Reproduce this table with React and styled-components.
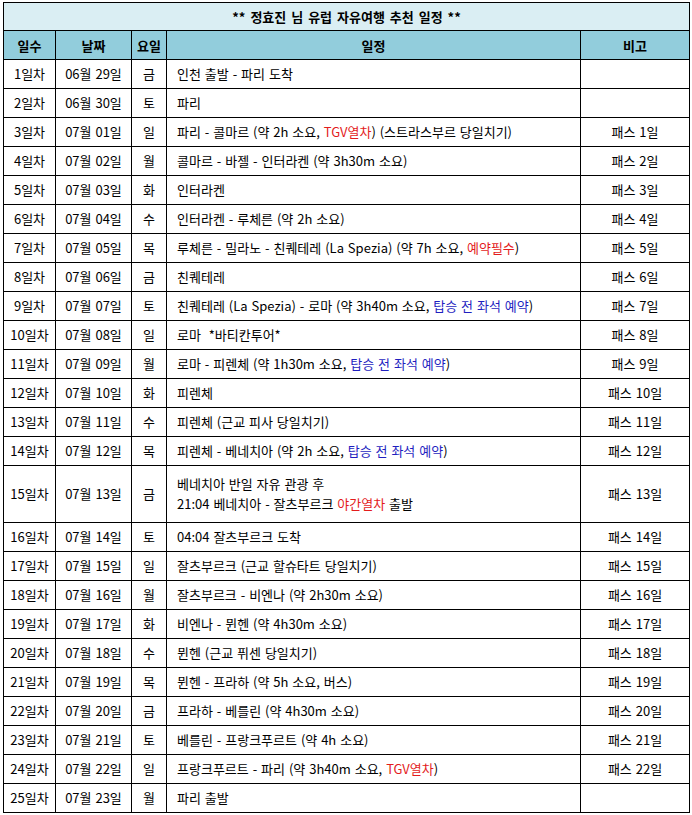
import React from 'react';
import styled, { createGlobalStyle } from 'styled-components';

const GlobalStyle = createGlobalStyle`
  html, body {
    margin: 0;
    padding: 0;
    background: #ffffff;
  }
  body {
    font-family: "Noto Sans CJK KR", "Noto Sans", sans-serif;
    color: #000;
  }
`;

const COLS = [52, 76, 35, 414, 109];

const schedule = [
  ['1일차', '06월 29일', '금', [['인천 출발 - 파리 도착']], ''],
  ['2일차', '06월 30일', '토', [['파리']], ''],
  ['3일차', '07월 01일', '일', [['파리 - 콜마르 (약 2h 소요, '], ['TGV열차', 'red'], [') (스트라스부르 당일치기)']], '패스 1일'],
  ['4일차', '07월 02일', '월', [['콜마르 - 바젤 - 인터라켄 (약 3h30m 소요)']], '패스 2일'],
  ['5일차', '07월 03일', '화', [['인터라켄']], '패스 3일'],
  ['6일차', '07월 04일', '수', [['인터라켄 - 루체른 (약 2h 소요)']], '패스 4일'],
  ['7일차', '07월 05일', '목', [['루체른 - 밀라노 - 친퀘테레 (La Spezia) (약 7h 소요, '], ['예약필수', 'red'], [')']], '패스 5일'],
  ['8일차', '07월 06일', '금', [['친퀘테레']], '패스 6일'],
  ['9일차', '07월 07일', '토', [['친퀘테레 (La Spezia) - 로마 (약 3h40m 소요, '], ['탑승 전 좌석 예약', 'blue'], [')']], '패스 7일'],
  ['10일차', '07월 08일', '일', [['로마 \u00a0*바티칸투어*']], '패스 8일'],
  ['11일차', '07월 09일', '월', [['로마 - 피렌체 (약 1h30m 소요, '], ['탑승 전 좌석 예약', 'blue'], [')']], '패스 9일'],
  ['12일차', '07월 10일', '화', [['피렌체']], '패스 10일'],
  ['13일차', '07월 11일', '수', [['피렌체 (근교 피사 당일치기)']], '패스 11일'],
  ['14일차', '07월 12일', '목', [['피렌체 - 베네치아 (약 2h 소요, '], ['탑승 전 좌석 예약', 'blue'], [')']], '패스 12일'],
  ['15일차', '07월 13일', '금', [['베네치아 반일 자유 관광 후'], ['br'], ['21:04 베네치아 - 잘츠부르크 '], ['야간열차', 'red'], [' 출발']], '패스 13일', true],
  ['16일차', '07월 14일', '토', [['04:04 잘츠부르크 도착']], '패스 14일'],
  ['17일차', '07월 15일', '일', [['잘츠부르크 (근교 할슈타트 당일치기)']], '패스 15일'],
  ['18일차', '07월 16일', '월', [['잘츠부르크 - 비엔나 (약 2h30m 소요)']], '패스 16일'],
  ['19일차', '07월 17일', '화', [['비엔나 - 뮌헨 (약 4h30m 소요)']], '패스 17일'],
  ['20일차', '07월 18일', '수', [['뮌헨 (근교 퓌센 당일치기)']], '패스 18일'],
  ['21일차', '07월 19일', '목', [['뮌헨 - 프라하 (약 5h 소요, 버스)']], '패스 19일'],
  ['22일차', '07월 20일', '금', [['프라하 - 베를린 (약 4h30m 소요)']], '패스 20일'],
  ['23일차', '07월 21일', '토', [['베를린 - 프랑크푸르트 (약 4h 소요)']], '패스 21일'],
  ['24일차', '07월 22일', '일', [['프랑크푸르트 - 파리 (약 3h40m 소요, '], ['TGV열차', 'red'], [')']], '패스 22일'],
  ['25일차', '07월 23일', '월', [['파리 출발']], ''],
];

const Page = styled.div`
  padding: 2px 0 0 3px;
`;

const Sheet = styled.table`
  border-collapse: collapse;
  table-layout: fixed;
  width: 687px;
  font-size: 13px;
`;

const TitleCell = styled.td`
  height: 27px;
  padding: 0;
  border: 1px solid #000;
  background: #daeef3;
  text-align: center;
  font-weight: bold;
  font-size: 13px;
  word-spacing: 2px;
`;

const HeadCell = styled.th`
  height: 28px;
  padding: 0;
  border: 1px solid #000;
  background: #92cddc;
  text-align: center;
  font-weight: bold;
  font-size: 13px;
`;

const Cell = styled.td`
  height: ${(p) => (p.$tall ? 56 : 28)}px;
  padding: ${(p) => (p.$left ? '0 6px 0 10px' : '0')};
  border: 1px solid #000;
  text-align: ${(p) => (p.$left ? 'left' : 'center')};
  line-height: 20px;
  word-spacing: 1px;
  white-space: nowrap;
  overflow: hidden;
`;

const Mark = styled.span`
  color: ${(p) => (p.$tone === 'red' ? '#e31c1c' : '#1f1fbf')};
`;

function Plan({ parts }) {
  return parts.map(([text, tone], i) => {
    if (text === 'br') return <br key={i} />;
    if (tone) return <Mark key={i} $tone={tone}>{text}</Mark>;
    return <React.Fragment key={i}>{text}</React.Fragment>;
  });
}

export default function App() {
  return (
    <Page>
      <GlobalStyle />
      <Sheet>
        <colgroup>
          {COLS.map((w, i) => (
            <col key={i} style={{ width: w }} />
          ))}
        </colgroup>
        <tbody>
          <tr>
            <TitleCell colSpan={5}>** 정효진 님 유럽 자유여행 추천 일정 **</TitleCell>
          </tr>
          <tr>
            <HeadCell>일수</HeadCell>
            <HeadCell>날짜</HeadCell>
            <HeadCell>요일</HeadCell>
            <HeadCell>일정</HeadCell>
            <HeadCell>비고</HeadCell>
          </tr>
          {schedule.map(([day, date, weekday, plan, note, tall]) => (
            <tr key={day}>
              <Cell $tall={tall}>{day}</Cell>
              <Cell $tall={tall}>{date}</Cell>
              <Cell $tall={tall}>{weekday}</Cell>
              <Cell $tall={tall} $left>
                <Plan parts={plan} />
              </Cell>
              <Cell $tall={tall}>{note}</Cell>
            </tr>
          ))}
        </tbody>
      </Sheet>
    </Page>
  );
}
